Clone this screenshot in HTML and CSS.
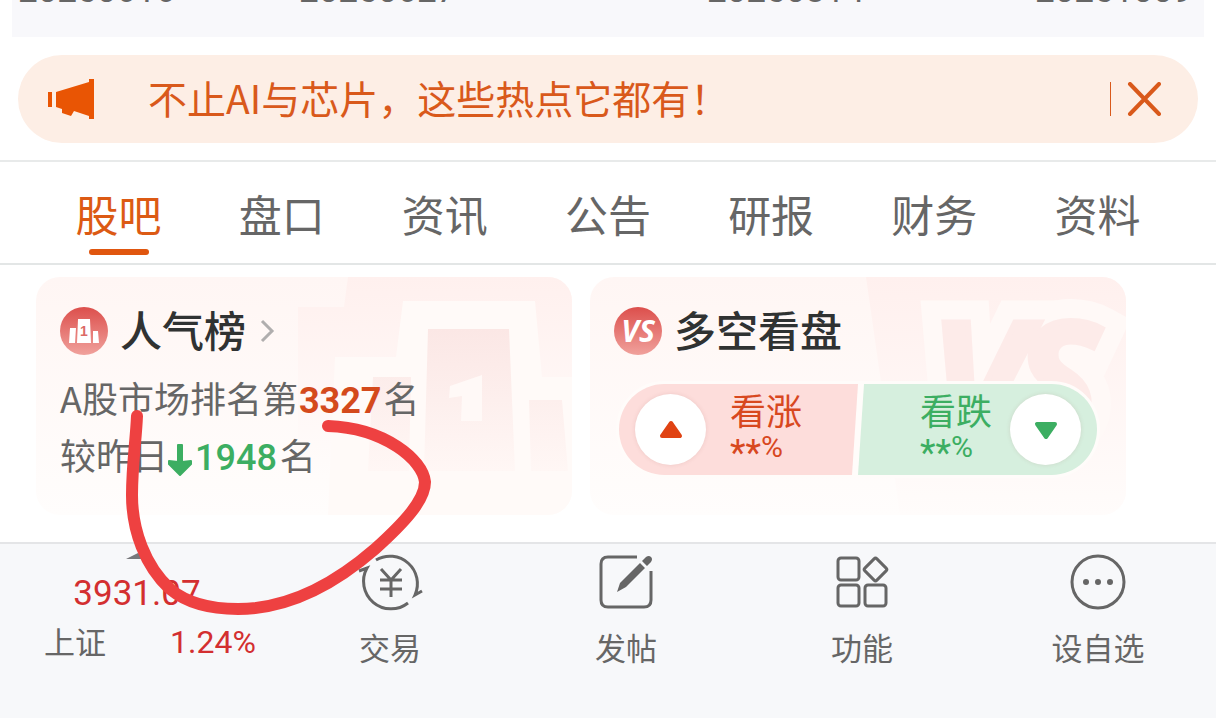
FILE: index.html
```html
<!DOCTYPE html>
<html lang="zh-CN">
  <head>
    <meta charset="utf-8" />
    <title>股吧</title>
    <meta name="viewport" content="width=device-width, initial-scale=1" />
    <link rel="stylesheet" href="styles.css">
  </head>
  <body>
    <div class="dates">
      <span>20250616</span>
      <span>20250627</span>
      <span>20250814</span>
      <span>20251009</span>
    </div>

    <div class="notice">
      <svg class="notice-icon" width="48" height="40" viewBox="0 0 48 40" aria-hidden="true">
        <path fill="#e95504" d="M0 13h4v15H0zM8 13 41 3V0h5v40h-5v-3L26 32l-3 5-9-3v-4l-6-2z" />
      </svg>
      <a class="notice-text" href="#">不止AI与芯片，这些热点它都有！</a>
      <button class="notice-close" aria-label="关闭">
        <svg width="34" height="34" viewBox="0 0 34 34">
          <path d="M3 2 32 32M32 2 3 32" fill="none" stroke="#d9591b" stroke-width="4" stroke-linecap="round" />
        </svg>
      </button>
    </div>

    <nav class="tabs">
      <a class="tab active" href="#">股吧</a>
      <a class="tab" href="#">盘口</a>
      <a class="tab" href="#">资讯</a>
      <a class="tab" href="#">公告</a>
      <a class="tab" href="#">研报</a>
      <a class="tab" href="#">财务</a>
      <a class="tab" href="#">资料</a>
    </nav>

    <main class="cards">
      <section class="card">
        <svg class="card-art" width="274" height="238" viewBox="0 0 274 238" aria-hidden="true">
          <defs>
            <linearGradient id="shade" x1="0" y1="0" x2="0" y2="1">
              <stop offset="0" stop-color="#fff0ee" />
              <stop offset="1" stop-color="#fffcfb" />
            </linearGradient>
            <linearGradient id="bar" x1="0" y1="0" x2="0" y2="1">
              <stop offset="0" stop-color="#fbe7e5" />
              <stop offset="1" stop-color="#fff7f5" />
            </linearGradient>
          </defs>
          <path fill="url(#shade)" d="M50 0H274V200H0V30H46z" />
          <path fill="#fffaf8" d="M37 80H98L105 24H237L244 100H274V238H30z" />
          <path fill="url(#bar)" d="M130 52H211L217 194H126zM75 100H113L111 194H70zM231 123H264L270 194H233z" />
          <path fill="#fff9f7" d="M152 109 184 98V144H163L164 119 151 121z" />
        </svg>
        <h2 class="card-title">
          <svg class="badge" width="48" height="48" viewBox="0 0 48 48" aria-hidden="true">
            <defs>
              <linearGradient id="red" x1="0" y1="0" x2="0" y2="1">
                <stop offset="0" stop-color="#dc4f4c" />
                <stop offset="1" stop-color="#f0a19c" />
              </linearGradient>
            </defs>
            <circle cx="24" cy="24" r="24" fill="url(#red)" />
            <path fill="#fff" d="M10 21h6l-1 15H9zM18 12h12l1 24H17zM33 24h5l1 12h-6z" />
            <text class="badge-one" x="24" y="29" text-anchor="middle">1</text>
          </svg>
          <span>人气榜</span>
          <svg class="chevron" width="18" height="24" viewBox="0 0 18 24" aria-hidden="true">
            <path d="M4 2 14 12 4 22" fill="none" stroke="#b0aeae" stroke-width="3" />
          </svg>
        </h2>
        <p class="rank">A股市场排名第<strong>3327</strong>名</p>
        <p class="rank">较昨日<svg class="down" width="24" height="34" viewBox="0 0 24 34" aria-hidden="true"><path fill="#3cae62" stroke="#3cae62" stroke-width="2" stroke-linejoin="round" d="M10 2h4v17l9-1v3L12 32 1 21v-3l9 1z" /></svg><b>1948</b>名</p>
      </section>

      <section class="card">
        <svg class="card-art" width="260" height="238" viewBox="0 0 260 238" aria-hidden="true">
          <path fill="url(#shade)" d="M0 0H260V238H34z" />
          <g class="vs-outline">
            <text x="64" y="161">V</text>
            <text x="148" y="161">S</text>
          </g>
          <g class="vs">
            <text x="64" y="161">V</text>
            <text x="148" y="161">S</text>
          </g>
        </svg>
        <h2 class="card-title">
          <svg class="badge" width="48" height="48" viewBox="0 0 48 48" aria-hidden="true">
            <circle cx="24" cy="24" r="24" fill="url(#red)" />
            <text class="badge-vs" x="24" y="35" text-anchor="middle">VS</text>
          </svg>
          <span>多空看盘</span>
        </h2>
        <div class="vote">
          <button class="vote-up">
            <span class="knob">
              <svg width="24" height="20" viewBox="0 0 24 20" aria-hidden="true">
                <path d="M12 3 21 16H3z" fill="#e04313" stroke="#e04313" stroke-width="4" stroke-linejoin="round" />
              </svg>
            </span>
            <span class="vote-text">看涨<small><i>**</i>%</small></span>
          </button>
          <button class="vote-down">
            <span class="vote-text">看跌<small><i>**</i>%</small></span>
            <span class="knob">
              <svg width="24" height="20" viewBox="0 0 24 20" aria-hidden="true">
                <path d="M12 17 3 4h18z" fill="#3cae62" stroke="#3cae62" stroke-width="4" stroke-linejoin="round" />
              </svg>
            </span>
          </button>
        </div>
      </section>
    </main>

    <footer class="bottom">
      <a class="index" href="#">
        <svg class="index-arrow" width="24" height="6" viewBox="0 0 24 6" aria-hidden="true">
          <path fill="#77787b" d="M2 6 14 0 24 6z" />
        </svg>
        <span class="index-value">3931.07</span>
        <span class="index-row"><span class="index-name">上证</span><span>1.24%</span></span>
      </a>
      <a class="action" href="#">
        <svg class="trade" width="64" height="56" viewBox="0 0 64 56" fill="none" stroke="#666" stroke-width="3" aria-hidden="true">
          <path d="M18 6A27.5 27.5 0 0 1 57 41L64 37" />
          <path d="M50 49A27.5 27.5 0 0 1 9 14L1 17" />
          <path d="M23 15 33 26 43 15M22 26H44M22 35H44M33 26V43" />
        </svg>
        交易
      </a>
      <a class="action" href="#">
        <svg width="56" height="56" viewBox="0 0 56 56" fill="none" stroke="#666" stroke-width="3" aria-hidden="true">
          <path d="M39 3H10Q3 3 3 10V46Q3 53 10 53H46Q53 53 53 46V17" />
          <path fill="#666" stroke="none" d="M42 9 47 14 28 33 19 38 22 29zM44 7 48 3Q51 1 53 3T53 8L49 12z" />
        </svg>
        发帖
      </a>
      <a class="action" href="#">
        <svg width="56" height="56" viewBox="0 0 56 56" fill="none" stroke="#666" stroke-width="3" aria-hidden="true">
          <rect x="4" y="4" width="21" height="22" rx="3" />
          <rect x="4" y="31" width="21" height="21" rx="3" />
          <rect x="31" y="31" width="21" height="21" rx="3" />
          <rect x="33" y="7" width="17" height="17" rx="2" transform="rotate(45 41.5 15.5)" />
        </svg>
        功能
      </a>
      <a class="action" href="#">
        <svg width="56" height="56" viewBox="0 0 56 56" aria-hidden="true">
          <circle cx="28" cy="28" r="26" fill="none" stroke="#666" stroke-width="3" />
          <g fill="#666">
            <circle cx="16" cy="28" r="3" />
            <circle cx="28" cy="28" r="3" />
            <circle cx="40" cy="28" r="3" />
          </g>
        </svg>
        设自选
      </a>
    </footer>

    <!-- hand-drawn marker round the ranking -->
    <svg class="marker" width="320" height="220" viewBox="120 400 320 220" aria-hidden="true">
      <path d="M137 416C136 440 132 465 132 495C132 530 145 566 170 589C188 604 213 609 238 609C285 609 330 588 375 549C405 522 425 500 425 482C423 460 385 428 328 426" />
    </svg>
  </body>
</html>
```
FILE: styles.css
```css
* {
  box-sizing: border-box;
}
body {
  margin: 0;
  min-height: 100vh;
  position: relative;
  display: flex;
  flex-direction: column;
  background: #fff;
  color: #666;
  font-family: "Noto Sans CJK SC", sans-serif;
}
a {
  color: inherit;
  text-decoration: none;
}
button {
  border: 0;
  padding: 0;
  background: none;
  color: inherit;
  font: inherit;
  cursor: pointer;
}
svg {
  flex: none;
}

/* dates under the chart, cut off by the top of the screen */
.dates {
  display: grid;
  grid-template-columns: 281fr 408fr 328fr 169fr;
  align-content: end;
  height: 37px;
  margin: 0 12px;
  padding: 0 0 25px 6px;
  overflow: hidden;
  background: #f8f8fb;
  font: 35px/42px Roboto, sans-serif;
}

.notice {
  display: flex;
  align-items: center;
  height: 88px;
  margin: 18px 18px 17px;
  padding: 0 37px 0 30px;
  border-radius: 44px;
  background: #fdeee5;
  color: #d9591b;
}
.notice-text {
  flex: 1;
  margin-left: 52px;
  padding-bottom: 4px;
  font-size: 39px;
}
.notice-close {
  display: flex;
  padding-left: 16px;
  border-left: 1px solid #d9591b;
}

.tabs {
  display: grid;
  grid-template-columns: repeat(7, 1fr);
  height: 105px;
  padding: 0 37px;
  border-top: 2px solid #e8eaea;
  border-bottom: 2px solid #e3e6e6;
}
.tab {
  display: flex;
  flex-direction: column;
  align-items: center;
  padding-top: 19px;
  font-size: 43px;
  line-height: 64px;
}
.tab.active {
  color: #dc5a14;
}
.tab.active::after {
  content: "";
  width: 60px;
  height: 6px;
  margin-top: 4px;
  border-radius: 3px;
  background: #e0560f;
}

.cards {
  display: grid;
  grid-template-columns: 1fr 1fr;
  gap: 18px;
  padding: 12px 90px 27px 36px;
}
.card {
  position: relative;
  height: 238px;
  padding: 24px;
  border-radius: 24px;
  overflow: hidden;
  background: linear-gradient(#fff6f4, #fffdfc);
}
.card-art {
  position: absolute;
  top: 0;
  right: 0;
}
.card-title {
  position: relative;
  display: flex;
  align-items: center;
  gap: 12px;
  margin: 0 0 8px;
  color: #303232;
  font-size: 42px;
  font-weight: 500;
  line-height: 56px;
}
.card-title span {
  padding-bottom: 4px;
}
.badge-one {
  fill: #dc6a66;
  font: bold 14px "Liberation Sans", sans-serif;
}
.badge-vs {
  fill: #fff;
  font: italic bold 30px "Open Sans", sans-serif;
}
.vs,
.vs-outline {
  fill: #fdebe9;
  stroke: #fdebe9;
  stroke-width: 6px;
  font: italic bold 162px "Open Sans", sans-serif;
}
.vs-outline {
  fill: #fff9f7;
  stroke: #fff9f7;
  stroke-width: 44px;
}
.rank {
  position: relative;
  margin: 0;
  font-size: 36px;
  line-height: 57px;
}
.rank strong,
.rank b {
  font-family: Roboto, sans-serif;
  line-height: 1;
}
.rank strong {
  margin: 0 2px 0 1px;
  color: #d44a1c;
}
.rank b {
  margin: 0 3px;
  color: #3cae62;
  font-weight: 500;
}
.down {
  vertical-align: -7px;
}

.vote {
  position: relative;
  display: flex;
  width: 484px;
  margin-top: 20px;
  margin-left: 2px;
  border: 3px solid #fffcfa;
  border-radius: 50px;
  overflow: hidden;
  background: #fffcfa;
}
.vote button {
  display: flex;
  flex: 1;
  align-items: center;
  gap: 24px;
  height: 91px;
  padding: 0 16px;
  text-align: left;
}
.vote-up {
  background: #fddddb;
  color: #d8481f;
  clip-path: polygon(0 0, 100% 0, calc(100% - 6px) 100%, 0 100%);
}
.vote .vote-down {
  justify-content: flex-end;
  gap: 18px;
  background: #d6efde;
  color: #3cae62;
  clip-path: polygon(6px 0, 100% 0, 100% 100%, 0 100%);
}
.knob {
  display: flex;
  align-items: center;
  justify-content: center;
  width: 71px;
  height: 71px;
  border-radius: 50%;
  background: #fff;
  box-shadow: 0 0 4px rgba(150, 90, 80, 0.15);
}
.vote-text {
  padding-bottom: 8px;
  font-size: 36px;
  line-height: 40px;
}
.vote-text small {
  display: block;
  padding-top: 2px;
  font: 30px/32px Roboto, sans-serif;
}
.vote-text i {
  font-size: 36px;
  font-style: normal;
  line-height: 0;
  vertical-align: -8px;
}

.bottom {
  display: grid;
  grid-template-columns: 272fr repeat(4, 236fr);
  flex: 1;
  border-top: 2px solid #e4e5e7;
  background: #f7f8fa;
}
.index {
  display: flex;
  flex-direction: column;
  align-items: center;
  padding-top: 9px;
  color: #d32f30;
  font: 32px/48px Roboto, sans-serif;
}
.index-value {
  padding: 11px 0 0 2px;
  font-size: 35px;
}
.index-row {
  display: flex;
  gap: 64px;
  padding-left: 28px;
}
.index-name {
  color: #666;
  font: 31px/46px "Noto Sans CJK SC", sans-serif;
}
.action {
  display: flex;
  flex-direction: column;
  align-items: center;
  gap: 14px;
  padding-top: 10px;
  font-size: 31px;
  line-height: 46px;
}
.trade {
  overflow: visible;
}

.marker {
  position: absolute;
  top: 400px;
  left: 120px;
  pointer-events: none;
}
.marker path {
  fill: none;
  stroke: #ee4141;
  stroke-width: 12px;
  stroke-linecap: round;
}
```
